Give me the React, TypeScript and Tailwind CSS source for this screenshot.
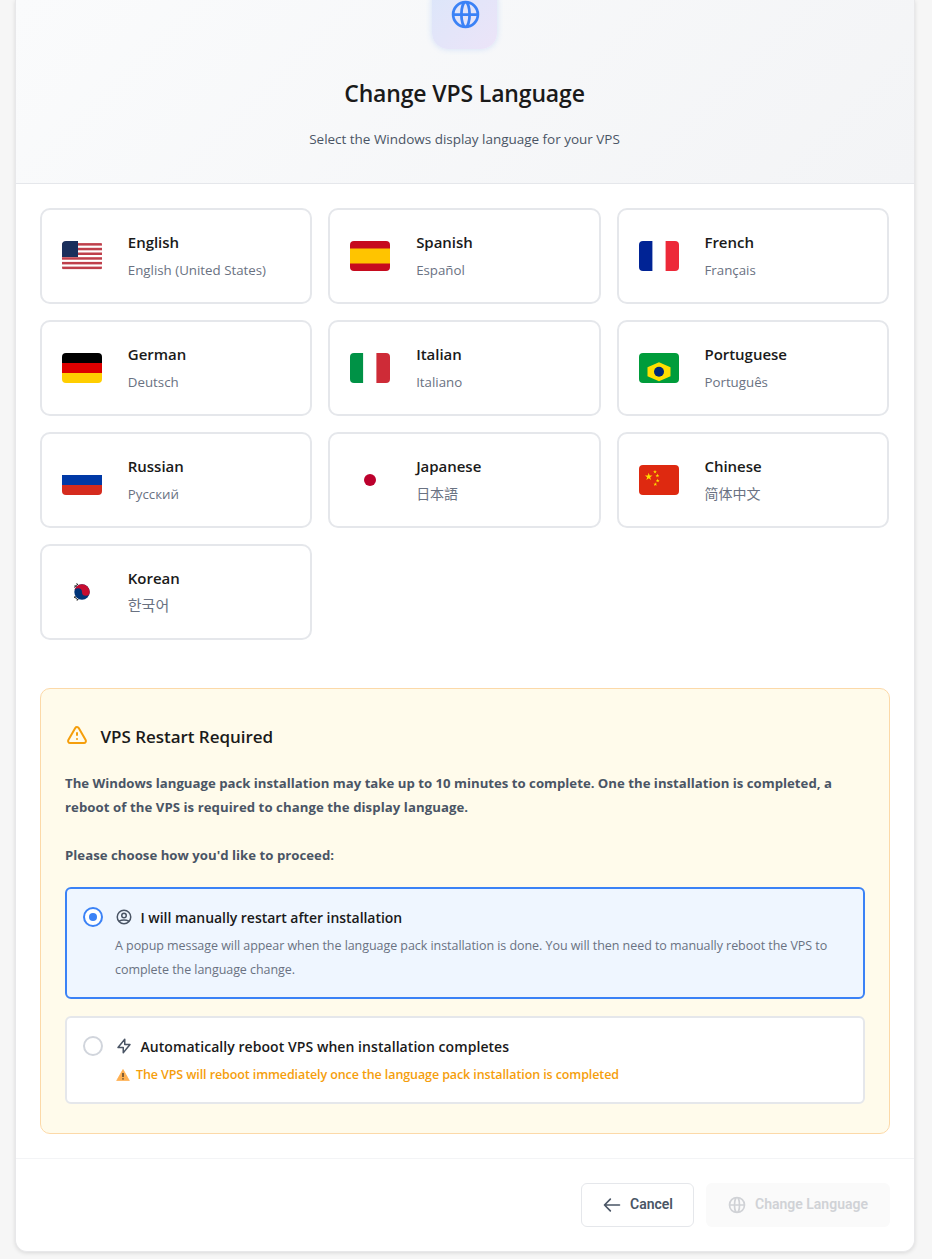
import { useState } from 'react';
import type { ReactNode } from 'react';

interface Language {
  id: string;
  name: string;
  native: string;
  nativeClass?: string;
  flag: ReactNode;
}

const ICONS = {
  globe:
    'M21 12a9 9 0 01-9 9m9-9a9 9 0 00-9-9m9 9H3m9 9a9 9 0 01-9-9m9 9c1.657 0 3-4.03 3-9s-1.343-9-3-9m0 18c-1.657 0-3-4.03-3-9s1.343-9 3-9m-9 9a9 9 0 019-9',
  warning:
    'M12 9v2m0 4h.01m-6.938 4h13.856c1.54 0 2.502-1.667 1.732-3L13.732 4c-.77-1.333-2.694-1.333-3.464 0L3.34 16c-.77 1.333.192 3 1.732 3z',
  user: 'M5.121 17.804A13.937 13.937 0 0112 16c2.5 0 4.847.655 6.879 1.804M15 10a3 3 0 11-6 0 3 3 0 016 0zm6 2a9 9 0 11-18 0 9 9 0 0118 0z',
  bolt: 'M13 10V3L4 14h7v7l9-11h-7z',
  back: 'M10 19l-7-7m0 0l7-7m-7 7h18',
};

const STAR = '0,-1 .2245,-.309 .951,-.309 .363,.118 .588,.809 0,.382 -.588,.809 -.363,.118 -.951,-.309 -.2245,-.309';

const CHINA_STARS = [
  [9.7, 11.8, 4],
  [16, 6.8, 2.1],
  [18.4, 10.6, 2.1],
  [18.7, 15.6, 2.1],
  [16.3, 19.3, 2.1],
];

const languages: Language[] = [
  {
    id: 'en',
    name: 'English',
    native: 'English (United States)',
    flag: (
      <>
        <rect width="40" height="30" fill="#fff" />
        {[0, 1, 2, 3, 4, 5].map((i) => (
          <rect key={i} y={2.1 + i * 4.7} width="40" height="2.5" fill="#bf3f4b" />
        ))}
        <rect width="16" height="16" fill="#1a2f5c" />
      </>
    ),
  },
  {
    id: 'es',
    name: 'Spanish',
    native: 'Español',
    flag: (
      <>
        <rect width="40" height="30" fill="#c60b1e" />
        <rect y="7.5" width="40" height="15" fill="#ffc400" />
      </>
    ),
  },
  {
    id: 'fr',
    name: 'French',
    native: 'Français',
    flag: (
      <>
        <rect width="40" height="30" fill="#fff" />
        <rect width="13.4" height="30" fill="#002395" />
        <rect x="26.6" width="13.4" height="30" fill="#ed2939" />
      </>
    ),
  },
  {
    id: 'de',
    name: 'German',
    native: 'Deutsch',
    flag: (
      <>
        <rect width="40" height="10" fill="#000" />
        <rect y="10" width="40" height="10" fill="#dd0000" />
        <rect y="20" width="40" height="10" fill="#ffce00" />
      </>
    ),
  },
  {
    id: 'it',
    name: 'Italian',
    native: 'Italiano',
    flag: (
      <>
        <rect width="40" height="30" fill="#fff" />
        <rect width="13.1" height="30" fill="#009246" />
        <rect x="26.4" width="13.6" height="30" fill="#ce2b37" />
      </>
    ),
  },
  {
    id: 'pt',
    name: 'Portuguese',
    native: 'Português',
    flag: (
      <>
        <rect width="40" height="30" fill="#009c3b" />
        <polygon points="20,9.2 31.5,14.2 31.5,23.2 20,28.2 8.5,23.2 8.5,14.2" fill="#ffdf00" />
        <circle cx="20" cy="18.7" r="5" fill="#002776" />
      </>
    ),
  },
  {
    id: 'ru',
    name: 'Russian',
    native: 'Русский',
    flag: (
      <>
        <rect width="40" height="10" fill="#fff" />
        <rect y="10" width="40" height="10" fill="#0039a6" />
        <rect y="20" width="40" height="10" fill="#d52b1e" />
      </>
    ),
  },
  {
    id: 'ja',
    name: 'Japanese',
    native: '日本語',
    nativeClass: 'mt-[4px] text-[14px]',
    flag: (
      <>
        <rect width="40" height="30" fill="#fff" />
        <circle cx="20" cy="15" r="6" fill="#bc002d" />
      </>
    ),
  },
  {
    id: 'zh',
    name: 'Chinese',
    native: '简体中文',
    nativeClass: 'mt-[4px] text-[14px]',
    flag: (
      <>
        <rect width="40" height="30" fill="#de2910" />
        {CHINA_STARS.map(([x, y, r]) => (
          <polygon key={y} points={STAR} transform={`translate(${x} ${y}) scale(${r})`} fill="#ffde00" />
        ))}
      </>
    ),
  },
  {
    id: 'ko',
    name: 'Korean',
    native: '한국어',
    nativeClass: 'mt-[3px] text-[15px]',
    flag: (
      <>
        <rect width="40" height="30" fill="#fff" />
        <path
          d="M12 10.5l4-3.6M12.8 8.2l1.6 1.8M14.6 6.4l1.6 1.8M12 19.5l4 3.6M12.2 21l1.8-1.8M15 23.6l1.4-1.8"
          stroke="#222"
          strokeWidth="1"
        />
        <circle cx="20" cy="15" r="7.7" fill="#003478" />
        <path d="M12.3 15a7.7 7.7 0 0 1 15.4 0a3.85 3.85 0 0 1-7.7 0a3.85 3.85 0 0 0-7.7 0z" fill="#c60c30" />
      </>
    ),
  },
];

function Icon({ path, className }: { path: string; className: string }) {
  return (
    <svg
      viewBox="0 0 24 24"
      className={`shrink-0 ${className}`}
      fill="none"
      stroke="currentColor"
      strokeWidth="2"
      strokeLinecap="round"
      strokeLinejoin="round"
    >
      <path d={path} />
    </svg>
  );
}

function Flag({ children }: { children: ReactNode }) {
  return (
    <svg viewBox="0 0 40 30" className="h-[30px] w-10 shrink-0 rounded">
      {children}
    </svg>
  );
}

function Radio({ checked }: { checked: boolean }) {
  return (
    <span
      className={`flex size-5 shrink-0 items-center justify-center rounded-full border-2 bg-white ${
        checked ? 'border-[#3b82f6]' : 'border-gray-300'
      }`}
    >
      {checked && <span className="size-2 rounded-full bg-[#3b82f6]" />}
    </span>
  );
}

export default function App() {
  const [restart, setRestart] = useState<'manual' | 'auto'>('manual');

  return (
    <div className="h-[1259px] overflow-hidden bg-[#f6f6f6] px-[15px] font-['Open_Sans','Noto_Sans_CJK_SC',sans-serif]">
      <div className="h-[1252px] w-[900px] overflow-hidden rounded-b-xl border border-t-0 border-[#e8e8ea] bg-white shadow-[0_1px_4px_rgba(0,0,0,0.12)]">
        {/* Header */}
        <div className="flex h-[184px] flex-col items-center border-b border-gray-200 bg-linear-135 from-[#fafbfc] to-[#f3f4f6] pr-px">
          <div className="-mt-[15px] flex h-16 w-[65px] items-center justify-center rounded-2xl bg-linear-135 from-[#dbe6fa] to-[#ece4f8] shadow-[0_0_6px_rgba(59,130,246,0.2)]">
            <Icon path={ICONS.globe} className="-mt-[5px] ml-px size-[33px] text-[#3b82f6]" />
          </div>
          <h1 className="mt-[26px] text-[23px] leading-9 font-semibold tracking-[-0.15px] whitespace-nowrap text-[#1a1a1a]">
            Change VPS Language
          </h1>
          <p className="mt-4 text-[13.5px] leading-6 tracking-[-0.02px] whitespace-nowrap text-gray-600">
            Select the Windows display language for your VPS
          </p>
        </div>

        {/* Language cards */}
        <div className="grid grid-cols-3 gap-4 pt-6 pr-[25px] pl-6">
          {languages.map((lang) => (
            <button
              key={lang.id}
              className="flex h-24 items-center rounded-[10px] border-2 border-[#e5e7eb] bg-white pl-5 text-left"
            >
              <Flag>{lang.flag}</Flag>
              <span className="ml-[25.8px] flex h-[52px] flex-col whitespace-nowrap">
                <span className="text-[15px] leading-6 font-semibold tracking-[-0.03px] text-[#1a1a1a]">{lang.name}</span>
                <span className={`leading-6 text-gray-500 ${lang.nativeClass ?? 'mt-1 text-[13.3px]'}`}>
                  {lang.native}
                </span>
              </span>
            </button>
          ))}
        </div>

        {/* Restart notice */}
        <div className="mx-6 mt-12 h-[446px] rounded-[10px] border border-[#fcd9a8] bg-[#fffbeb] px-6">
          <div className="mt-[35px] flex h-6 items-center">
            <Icon path={ICONS.warning} className="size-6 text-[#f59e0b]" />
            <h2 className="mt-0.5 ml-[11.5px] text-[17px] font-semibold tracking-[-0.04px] whitespace-nowrap text-[#1a1a1a]">
              VPS Restart Required
            </h2>
          </div>
          <p className="mt-[23px] text-[13.2px] leading-6 font-bold whitespace-nowrap text-gray-600">
            The Windows language pack installation may take up to 10 minutes to complete. One the installation is completed, a
            <br />
            <span className="tracking-[0.06px]">reboot of the VPS is required to change the display language.</span>
          </p>
          <p className="mt-6 text-[13.2px] leading-6 font-bold tracking-[0.02px] text-gray-600">Please choose how you'd like to proceed:</p>

          <div
            onClick={() => setRestart('manual')}
            className={`mt-5 flex h-28 rounded-md border-2 px-4 pt-[18px] ${
              restart === 'manual' ? 'border-[#3b82f6] bg-[#eff6ff]' : 'border-gray-200 bg-white'
            }`}
          >
            <Radio checked={restart === 'manual'} />
            <div className="ml-3 whitespace-nowrap">
              <div className="-mt-0.5 flex h-6 items-center">
                <Icon path={ICONS.user} className="size-[18px] text-gray-600" />
                <span className="mt-0.5 ml-[7.5px] text-sm font-semibold tracking-[-0.04px] text-[#1a1a1a]">
                  I will manually restart after installation
                </span>
              </div>
              <p className="mt-[5px] text-[12.5px] leading-6 tracking-[-0.055px] text-gray-500">
                A popup message will appear when the language pack installation is done. You will then need to manually reboot the VPS to
                <br />
                complete the language change.
              </p>
            </div>
          </div>

          <div
            onClick={() => setRestart('auto')}
            className={`mt-[17px] flex h-[88px] rounded-md border-2 px-4 pt-[18px] ${
              restart === 'auto' ? 'border-[#3b82f6] bg-[#eff6ff]' : 'border-gray-200 bg-white'
            }`}
          >
            <Radio checked={restart === 'auto'} />
            <div className="ml-3 whitespace-nowrap">
              <div className="-mt-0.5 flex h-6 items-center">
                <Icon path={ICONS.bolt} className="size-[18px] text-gray-600" />
                <span className="mt-0.5 ml-[7.5px] text-sm font-semibold tracking-[0.06px] text-[#1a1a1a]">
                  Automatically reboot VPS when installation completes
                </span>
              </div>
              <div className="mt-[5px] flex h-6 items-center">
                <svg viewBox="0 0 14 12" className="ml-px h-3 w-3.5">
                  <path d="M7 .5 13.3 11.6H.7z" fill="#ffb050" stroke="#ffb050" strokeWidth=".8" strokeLinejoin="round" />
                  <path d="M7 4v4M7 9.2v1.3" stroke="#4b3b2b" strokeWidth="1.4" />
                </svg>
                <span className="ml-[6px] text-[12.5px] font-semibold tracking-[-0.1px] text-[#f59e0b]">
                  The VPS will reboot immediately once the language pack installation is completed
                </span>
              </div>
            </div>
          </div>
        </div>

        {/* Actions */}
        <div className="mt-6 flex justify-end gap-3 border-t border-gray-100 px-6 pt-6 font-[Roboto,sans-serif] text-sm font-semibold">
          <button className="flex h-11 w-[113px] items-center rounded-md border border-gray-200 bg-white pl-5 text-gray-600">
            <Icon path={ICONS.back} className="size-5" />
            <span className="-mt-0.5 ml-2">Cancel</span>
          </button>
          <button disabled className="flex h-11 w-[184px] items-center rounded-md bg-[#fafafa] pl-[21px] text-[#d0d2d6]">
            <Icon path={ICONS.globe} className="size-5" />
            <span className="-mt-0.5 ml-2 whitespace-nowrap">Change Language</span>
          </button>
        </div>
      </div>
    </div>
  );
}
